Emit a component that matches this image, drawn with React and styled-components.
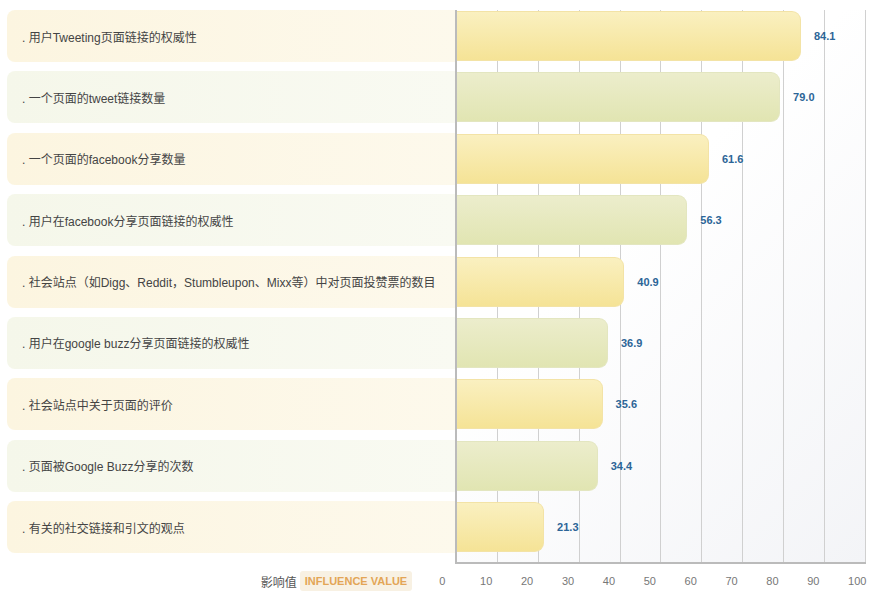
import React from "react";
import styled, { createGlobalStyle } from "styled-components";

const G = createGlobalStyle`
  body { margin: 0; background: #fff; font-family: "Liberation Sans", "Noto Sans CJK SC", sans-serif; }
`;

const data = [
  ["用户Tweeting页面链接的权威性", 84.1],
  ["一个页面的tweet链接数量", 79.0],
  ["一个页面的facebook分享数量", 61.6],
  ["用户在facebook分享页面链接的权威性", 56.3],
  ["社会站点（如Digg、Reddit，Stumbleupon、Mixx等）中对页面投赞票的数目", 40.9],
  ["用户在google buzz分享页面链接的权威性", 36.9],
  ["社会站点中关于页面的评价", 35.6],
  ["页面被Google Buzz分享的次数", 34.4],
  ["有关的社交链接和引文的观点", 21.3],
];
const UNIT = 4.09;

const Wrap = styled.div`
  width: 889px; height: 595px; padding: 10px 0 0 7px; box-sizing: border-box;
`;
const Chart = styled.div`
  display: grid; grid-template-columns: 450px 409px;
`;
const Col = styled.div`
  display: flex; flex-direction: column; gap: 9.4px; padding-bottom: 9px;
`;
const Label = styled.div`
  height: 52px; display: flex; align-items: center; padding-left: 15px;
  border-radius: 8px 0 0 8px; font-size: 12px; color: #444;
  background: ${p => p.$alt
    ? "linear-gradient(90deg,#f5f7ea,#f9faf2)"
    : "linear-gradient(90deg,#fcf5e0,#fdf9ec)"};
`;
const Plot = styled(Col)`
  border-left: 2px solid #bbb; border-bottom: 2px solid #bbb; margin-left: -2px;
  background:
    repeating-linear-gradient(90deg, transparent 0 39.9px, #d0d0d0 39.9px 40.9px),
    linear-gradient(135deg, #fff 40%, #f3f4f7 100%);
  background-position: 0 0;
`;
const Row = styled.div`
  height: 52px; display: flex; align-items: center;
`;
const Bar = styled.div`
  height: 50px; border-radius: 0 9px 9px 0; box-sizing: border-box;
  background: ${p => p.$alt
    ? "linear-gradient(#ecedcc,#e1e5b2)"
    : "linear-gradient(#faf0c0,#f5e396)"};
  border: 1px solid ${p => p.$alt ? "#e3e6c0" : "#f3e3a6"}; border-left: none;
`;
const Val = styled.span`
  margin-left: 13px; font-size: 11px; font-weight: bold; color: #2c6597;
`;
const Footer = styled.div`
  display: flex; align-items: center; height: 22px; margin-top: 6px;
`;
const Legend = styled.div`
  width: 450px; display: flex; justify-content: flex-end; align-items: center; gap: 3px;
  padding-right: 27px; box-sizing: border-box; font-size: 12px; color: #555;
`;
const Badge = styled.span`
  background: #f8f1e3; color: #e3a556; font-weight: bold; font-size: 11px;
  padding: 4px 5px; border-radius: 3px;
`;
const Ticks = styled.div`
  display: flex; font-size: 11px; color: #777;
`;
const Tick = styled.span`
  width: 40.9px; flex: none;
`;

export default function App() {
  return (
    <Wrap>
      <G />
      <Chart>
        <Col>
          {data.map(([t], i) => <Label key={i} $alt={i % 2 === 1}>. {t}</Label>)}
        </Col>
        <Plot>
          {data.map(([, v], i) => (
            <Row key={i}>
              <Bar $alt={i % 2 === 1} style={{ width: v * UNIT }} />
              <Val>{v.toFixed(1)}</Val>
            </Row>
          ))}
        </Plot>
      </Chart>
      <Footer>
        <Legend>影响值 <Badge>INFLUENCE VALUE</Badge></Legend>
        <Ticks>
          {[0,10,20,30,40,50,60,70,80,90,100].map(n => <Tick key={n}>{n}</Tick>)}
        </Ticks>
      </Footer>
    </Wrap>
  );
}
